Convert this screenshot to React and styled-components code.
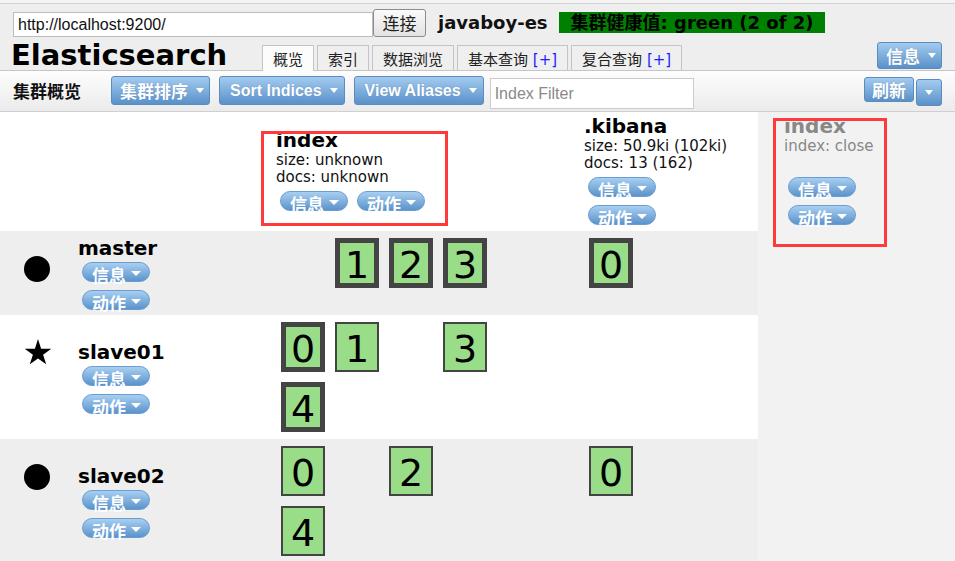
import React from 'react';
import styled, { createGlobalStyle } from 'styled-components';

const CJK = '"Noto Sans CJK SC"';
const ARIAL = `"Liberation Sans", ${CJK}, sans-serif`;
const VERDANA = `"DejaVu Sans", ${CJK}, sans-serif`;

const GlobalStyle = createGlobalStyle`
  html, body { margin: 0; padding: 0; }
  body {
    width: 955px;
    height: 561px;
    overflow: hidden;
    background: #f4f4f4;
    font-family: ${VERDANA};
  }
`;

const Page = styled.div`
  padding-top: 3px;
`;

const Header = styled.header`
  background: #eeeeee;
  border-top: 1px solid #d4d4d4;
  border-bottom: 1px solid #c6c6c6;
  padding: 0 13px;
`;

const ConnectRow = styled.div`
  display: flex;
  align-items: flex-start;
  box-sizing: border-box;
  height: 36px;
  padding-top: 5px;
`;

const UrlInput = styled.input`
  box-sizing: border-box;
  width: 360px;
  height: 25px;
  margin: 3px 0 0;
  padding: 0 4px;
  border: 1px solid #bcbcbc;
  background: #fff;
  font: 16px ${ARIAL};
  color: #111;
  outline: none;
`;

const ConnectButton = styled.button`
  box-sizing: border-box;
  width: 53px;
  height: 28px;
  margin: 0;
  padding: 0;
  border: 1px solid #8c8c8c;
  border-radius: 3px;
  background: linear-gradient(#fbfbfb, #e2e2e2);
  font: 17px/26px ${CJK}, sans-serif;
  color: #222;
`;

const ClusterName = styled.span`
  margin-left: 12px;
  font: bold 18px/28px ${VERDANA};
  color: #111;
`;

const Health = styled.span`
  margin: 3px 0 0 11px;
  height: 21px;
  padding: 0 11px 0 12px;
  background: #008000;
  font: bold 18px/21px ${VERDANA};
  color: #000;
  white-space: nowrap;
`;

const TitleRow = styled.div`
  display: flex;
  align-items: flex-end;
  height: 30px;
`;

const Title = styled.h1`
  margin: 0 0 0 -2px;
  width: 251px;
  font: bold 29px/30px ${VERDANA};
  color: #000;
  align-self: flex-start;
`;

const Tabs = styled.nav`
  display: flex;
  align-items: flex-end;
  gap: 3px;
  margin-bottom: -1px;
`;

const Tab = styled.div`
  box-sizing: border-box;
  height: ${p => (p.$active ? 26 : 25)}px;
  margin-bottom: ${p => (p.$active ? 0 : 1)}px;
  padding: 4px 10px 0;
  border: 1px solid #c4c4c4;
  border-bottom: none;
  background: ${p => (p.$active ? '#fcfcfc' : '#efefef')};
  font: 15px/21px ${VERDANA};
  color: #222;
  white-space: nowrap;
`;

const Plus = styled.span`
  color: #1c1cff;
`;

const Spacer = styled.div`
  flex: 1;
`;

const BlueButton = styled.button`
  display: inline-flex;
  align-items: center;
  box-sizing: border-box;
  height: ${p => p.$h || 29}px;
  margin: ${p => p.$mt || 0}px 0 ${p => p.$mb || 0}px ${p => p.$ml || 0}px;
  padding: 0 ${p => p.$pr ?? 6}px 0 ${p => p.$pl ?? 10}px;
  border: 1px solid #5a8cc2;
  border-radius: 3px;
  background: linear-gradient(#a3cbef, #5a91c9);
  color: #fff;
  font-family: ${ARIAL};
  font-weight: bold;
  font-size: ${p => p.$fs || 16}px;
  text-shadow: 0 0 1px rgba(30, 60, 110, 0.35);
  white-space: nowrap;
  cursor: pointer;
`;

const Caret = styled.span`
  flex-shrink: 0;
  width: 0;
  height: 0;
  border-left: ${p => p.$w || 4}px solid transparent;
  border-right: ${p => p.$w || 4}px solid transparent;
  border-top: ${p => p.$h || 5}px solid #fff;
  margin-left: ${p => p.$gap ?? 8}px;
  margin-right: ${p => p.$mr || 0}px;
`;

const Toolbar = styled.div`
  display: flex;
  align-items: flex-start;
  box-sizing: border-box;
  height: 41px;
  padding: 5px 13px 0;
  background: linear-gradient(#fdfdfd, #ebebeb);
  border-bottom: 1px solid #cfcfcf;
  gap: 9px;
`;

const ToolbarTitle = styled.span`
  width: 89px;
  font: bold 17px/29px ${CJK}, sans-serif;
  color: #111;
`;

const FilterInput = styled.input`
  box-sizing: border-box;
  width: 204px;
  height: 31px;
  margin: 2px 0 0 -3px;
  padding: 0 4px;
  border: 1px solid #cccccc;
  background: #fff;
  font: 16px ${ARIAL};
  outline: none;
  &::placeholder {
    color: #8a8a8a;
  }
`;

const SplitGroup = styled.div`
  display: flex;
  align-items: flex-start;
  gap: 2px;
  margin-left: auto;
`;

const Cluster = styled.section`
  background: #fff;
`;

const Row = styled.div`
  display: grid;
  grid-template-columns: 75px 201px 308px 174px 197px;
  background: ${p => (p.$shade ? '#eeeeee' : '#ffffff')};
`;

const HeadCell = styled.div`
  position: relative;
  display: flex;
  flex-direction: column;
  justify-content: center;
  padding: 3px 0 6px ${p => p.$pl || 0}px;
  background: ${p => p.$bg || 'transparent'};
`;

const ClosedColumn = styled.div`
  background: #f2f2f2;
`;

const IndexName = styled.div`
  font: bold 20px/22px ${VERDANA};
  color: ${p => p.$muted ? '#888888' : '#000000'};
`;

const IndexStat = styled.div`
  height: 17px;
  font: 15px/18px ${VERDANA};
  color: ${p => p.$muted ? '#888888' : '#111111'};
  white-space: nowrap;
`;

const PillGroup = styled.div`
  display: flex;
  flex-direction: ${p => (p.$stack ? 'column' : 'row')};
  gap: ${p => (p.$stack ? 8 : 9)}px;
  margin: ${p => p.$mt ?? 6}px 0 0 4px;
`;

const Pill = styled.button`
  display: flex;
  align-items: flex-start;
  box-sizing: border-box;
  width: 68px;
  height: 20px;
  margin: 0;
  padding: 3px 0 0 9px;
  border: 1px solid #6a9dd2;
  border-radius: 10px;
  background: linear-gradient(#a8cff1, #5b93cb);
  color: #fff;
  font: bold 17px/18px ${CJK}, sans-serif;
  overflow: visible;
  cursor: pointer;
  & > ${Caret} {
    align-self: center;
    margin-left: auto;
  }
`;

const IconCell = styled.div`
  align-self: start;
  padding: ${p => p.$pt || 25}px 0 0 24px;
  line-height: 0;
`;

const NameCell = styled.div`
  align-self: center;
  padding: 6px 0 5px 3px;
`;

const NodeName = styled.div`
  font: bold 20px/22px ${VERDANA};
  color: #000;
`;

const ShardGrid = styled.div`
  align-self: start;
  display: grid;
  grid-template-columns: repeat(4, 44px);
  grid-auto-rows: 50px;
  column-gap: 10px;
  row-gap: 10px;
  padding: 7px 0 7px 5px;
`;

const Shard = styled.div`
  grid-column: ${p => p.$col};
  grid-row: ${p => p.$row};
  box-sizing: border-box;
  width: 44px;
  height: 50px;
  padding-top: 4px;
  border: ${p => (p.$primary ? 5 : 2)}px solid #444444;
  background: #99dd88;
  display: flex;
  align-items: center;
  justify-content: center;
  font: 38px/1 "DejaVu Sans", sans-serif;
  color: #000;
`;

const Annotation = styled.div`
  position: absolute;
  left: ${p => p.$x}px;
  top: ${p => p.$y}px;
  width: ${p => p.$w}px;
  height: ${p => p.$h}px;
  box-sizing: border-box;
  border: 3px solid #ff3a3a;
  pointer-events: none;
`;

const NodeIcon = ({ kind }) =>
  kind === 'star' ? (
    <svg width="28" height="26" viewBox="0 0 28 26">
      <polygon
        fill="#000"
        points="14,0 17.1,9.7 27.3,9.7 19.1,15.7 22.2,25.3 14,19.4 5.8,25.3 8.9,15.7 0.7,9.7 10.9,9.7"
      />
    </svg>
  ) : (
    <svg width="26" height="26" viewBox="0 0 26 26">
      <circle cx="13" cy="13" r="13" fill="#000" />
    </svg>
  );

const Pills = ({ stack, mt }) => (
  <PillGroup $stack={stack} $mt={mt}>
    <Pill>信息<Caret $w={5} $h={5} $mr={8} /></Pill>
    <Pill>动作<Caret $w={5} $h={5} $mr={8} /></Pill>
  </PillGroup>
);

const Shards = ({ list }) => (
  <ShardGrid>
    {list.map(s => (
      <Shard key={s.n} $col={(s.n % 4) + 1} $row={Math.floor(s.n / 4) + 1} $primary={s.p}>
        {s.n}
      </Shard>
    ))}
  </ShardGrid>
);

const nodes = [
  {
    name: 'master',
    icon: 'circle',
    shade: true,
    pt: 25,
    index: [{ n: 1, p: true }, { n: 2, p: true }, { n: 3, p: true }],
    kibana: [{ n: 0, p: true }],
  },
  {
    name: 'slave01',
    icon: 'star',
    shade: false,
    pt: 24,
    index: [{ n: 0, p: true }, { n: 1 }, { n: 3 }, { n: 4, p: true }],
    kibana: [],
  },
  {
    name: 'slave02',
    icon: 'circle',
    shade: true,
    pt: 25,
    index: [{ n: 0 }, { n: 2 }, { n: 4 }],
    kibana: [{ n: 0 }],
  },
];

export default function App() {
  return (
    <Page>
      <GlobalStyle />
      <Header>
        <ConnectRow>
          <UrlInput defaultValue="http://localhost:9200/" />
          <ConnectButton>连接</ConnectButton>
          <ClusterName>javaboy-es</ClusterName>
          <Health>集群健康值: green (2 of 2)</Health>
        </ConnectRow>
        <TitleRow>
          <Title>Elasticsearch</Title>
          <Tabs>
            <Tab $active>概览</Tab>
            <Tab>索引</Tab>
            <Tab>数据浏览</Tab>
            <Tab>基本查询 <Plus>[+]</Plus></Tab>
            <Tab>复合查询 <Plus>[+]</Plus></Tab>
          </Tabs>
          <Spacer />
          <BlueButton $h={27} $mb={1} $pl={8} $pr={5} $fs={17}>
            信息<Caret />
          </BlueButton>
        </TitleRow>
      </Header>

      <Toolbar>
        <ToolbarTitle>集群概览</ToolbarTitle>
        <BlueButton $pl={8} $pr={5} $fs={17}>集群排序<Caret /></BlueButton>
        <BlueButton>Sort Indices<Caret /></BlueButton>
        <BlueButton>View Aliases<Caret /></BlueButton>
        <FilterInput placeholder="Index Filter" />
        <SplitGroup>
          <BlueButton $h={25} $mt={1} $pl={7} $pr={7} $fs={17}>刷新</BlueButton>
          <BlueButton $h={27} $mt={3} $pl={8} $pr={8}><Caret $gap={0} /></BlueButton>
        </SplitGroup>
      </Toolbar>

      <Cluster>
        <Row>
          <HeadCell />
          <HeadCell />
          <HeadCell>
            <Annotation $x={-15} $y={19} $w={187} $h={95} />
            <IndexName>index</IndexName>
            <IndexStat>size: unknown</IndexStat>
            <IndexStat>docs: unknown</IndexStat>
            <Pills />
          </HeadCell>
          <HeadCell>
            <IndexName>.kibana</IndexName>
            <IndexStat>size: 50.9ki (102ki)</IndexStat>
            <IndexStat>docs: 13 (162)</IndexStat>
            <Pills stack />
          </HeadCell>
          <HeadCell $pl={26} $bg="#f2f2f2">
            <Annotation $x={15} $y={6} $w={114} $h={129} />
            <IndexName $muted>index</IndexName>
            <IndexStat $muted>index: close</IndexStat>
            <IndexStat />
            <Pills stack />
          </HeadCell>
        </Row>

        {nodes.map(node => (
          <Row key={node.name} $shade={node.shade}>
            <IconCell $pt={node.pt}>
              <NodeIcon kind={node.icon} />
            </IconCell>
            <NameCell>
              <NodeName>{node.name}</NodeName>
              <Pills stack mt={3} />
            </NameCell>
            <Shards list={node.index} />
            <Shards list={node.kibana} />
            <ClosedColumn />
          </Row>
        ))}
      </Cluster>
    </Page>
  );
}
